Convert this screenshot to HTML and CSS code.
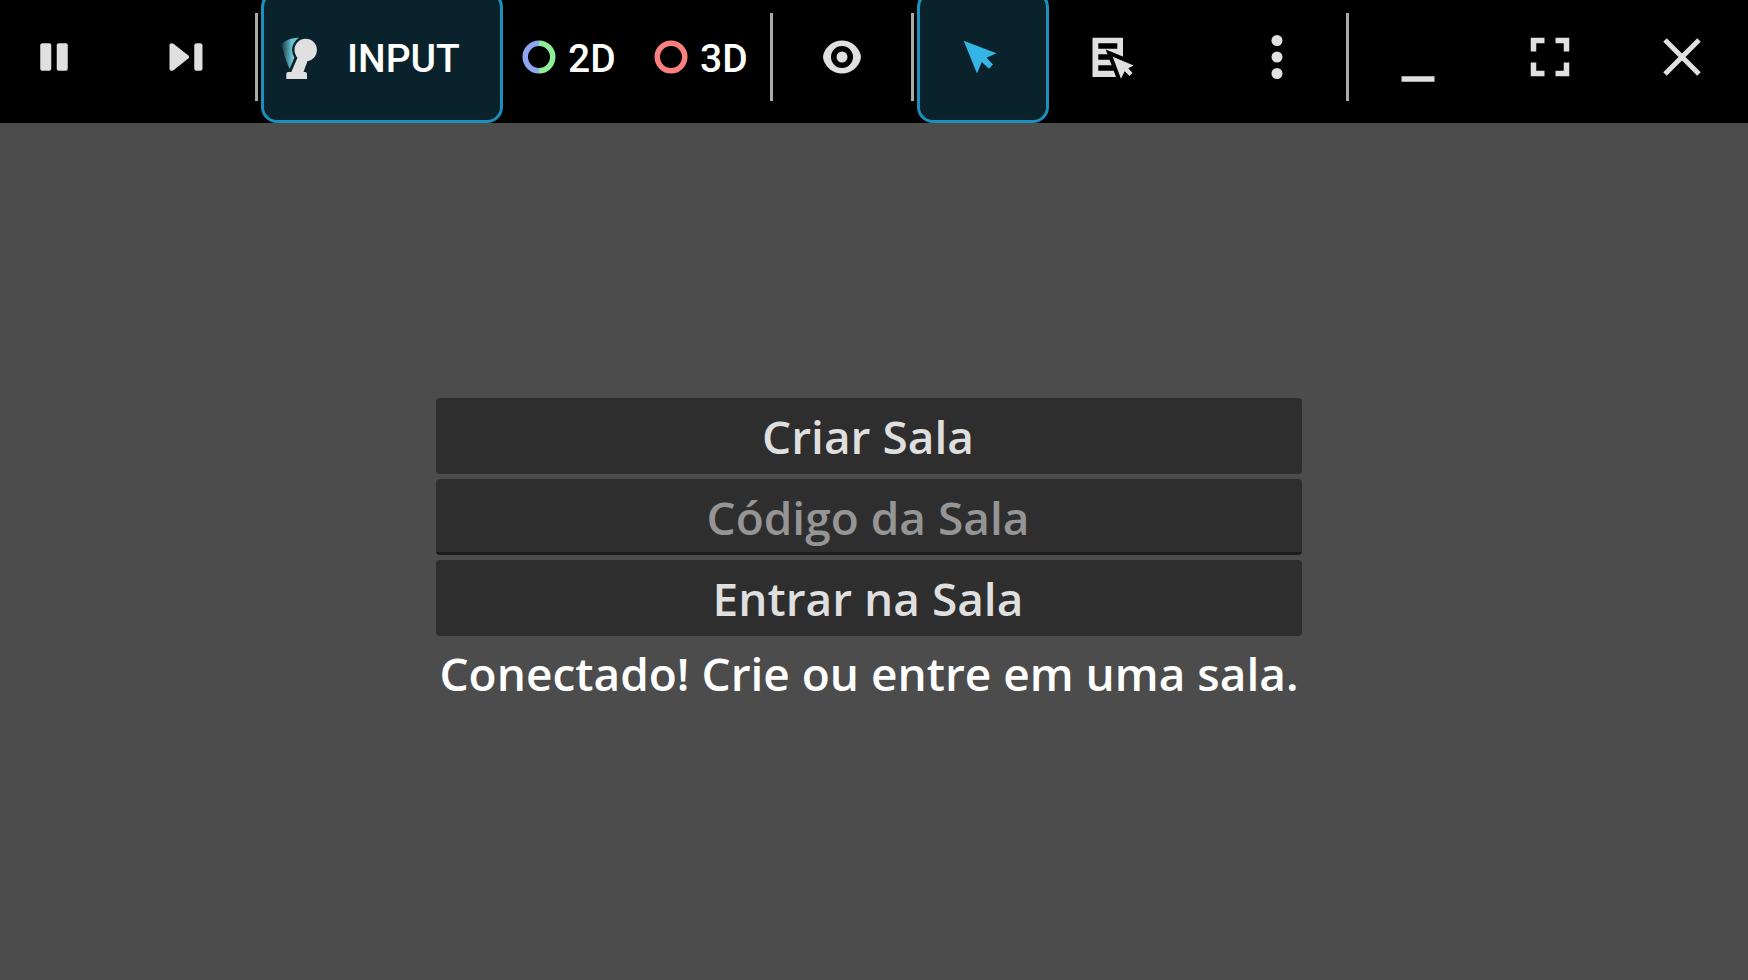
FILE: index.html
```html
<!DOCTYPE html>
<html lang="pt-BR">
<head>
<meta charset="utf-8">
<title>Sala</title>
<link rel="stylesheet" href="styles.css">
</head>
<body>
<header class="toolbar">
  <button class="tool tool-first" type="button" aria-label="Pausar">
    <svg class="icon" viewBox="0 0 44 44"><rect x="8.25" y="8.25" width="11" height="27.5" rx="2"/><rect x="24.75" y="8.25" width="11" height="27.5" rx="2"/></svg>
  </button>
  <button class="tool" type="button" aria-label="Próximo quadro">
    <svg class="icon" viewBox="0 0 44 44"><path d="M5.5 10.5v23c0 2.200 2.200 3 4 1.700L24.300 23.600c1-.9 1-2.300 0-3.200L9.500 8.800C7.700 7.500 5.500 8.300 5.500 10.500z"/><rect x="30.250" y="8.250" width="8.250" height="27.500" rx="2.500"/></svg>
  </button>
  <span class="divider"></span>
  <button class="tool tool-input active" type="button">
    <svg class="icon" viewBox="0 0 44 44">
      <defs><linearGradient id="fan" x1="0" x2="1"><stop offset="0" stop-color="#69c4d4" stop-opacity=".15"/><stop offset=".6" stop-color="#69c4d4"/><stop offset="1" stop-color="#69c4d4"/></linearGradient></defs>
      <path fill="url(#fan)" d="M2.500 8.700Q10 2.300 20 2.700Q13.500 7 13 14.500Q13 19 15.500 22.500L10.500 34Q5 22 2.500 8.700z"/>
      <circle cx="26.700" cy="15" r="11.200"/>
      <path d="M18.700 22.300L12.300 37H9.300q-2 0-2 2v5H28v-5q0-2-2-2H24.500L28.900 25z"/>
    </svg>
    <span class="label">INPUT</span>
  </button>
  <button class="tool tool-mode" type="button">
    <svg class="icon ring" viewBox="0 0 44 44"><path stroke="#8da5f3" d="M22 8.250a13.750 13.750 0 0 0 0 27.500"/><path stroke="#8eef97" d="M22 8.250a13.750 13.750 0 0 1 0 27.500"/></svg>
    <span class="label">2D</span>
  </button>
  <button class="tool tool-mode" type="button">
    <svg class="icon ring" viewBox="0 0 44 44"><circle stroke="#fc7f7f" cx="22" cy="22" r="13.750"/></svg>
    <span class="label">3D</span>
  </button>
  <span class="divider"></span>
  <button class="tool" type="button" aria-label="Visibilidade">
    <svg class="icon" viewBox="0 0 44 44"><path fill-rule="evenodd" d="M22 5.500C31 5.500 37.500 11 40.500 19Q41.500 22 40.500 25C37.500 33 31 38.500 22 38.500S6.500 33 3.500 25Q2.500 22 3.500 19C6.500 11 13 5.500 22 5.500zM22 11a11 11 0 1 0 0 22a11 11 0 1 0 0-22z"/><circle cx="22" cy="22" r="5.500"/></svg>
  </button>
  <span class="divider"></span>
  <button class="tool active" type="button" aria-label="Selecionar">
    <svg class="icon" viewBox="0 0 44 44"><path fill="#35b4e6" d="M2.700 5.700L35.500 18.300L25.500 22.700L32 29.500L28 33.800L20.800 27L16 38.500z"/></svg>
  </button>
  <button class="tool" type="button" aria-label="Lista de seleção">
    <svg class="icon" viewBox="0 0 44 44"><path fill-rule="evenodd" d="M-.5 2.750H30V42H-.5zM5.300 8.200v5.500h19V8.200zM5.300 19.200v5.500H24.300v-5.500zM5.300 30.200v5.500H30v-5.500z"/><path class="knock" d="M19.700 21.700L40.700 30.500L35.300 33.300L39.500 38L36.500 41L31.700 36.300L28 43.700z"/><path d="M19.700 21.700L40.700 30.500L35.300 33.300L39.500 38L36.500 41L31.700 36.300L28 43.700z"/></svg>
  </button>
  <span class="spacer"></span>
  <button class="tool" type="button" aria-label="Mais opções">
    <svg class="icon" viewBox="0 0 44 44"><circle cx="22" cy="5.500" r="5.500"/><circle cx="22" cy="22" r="5.500"/><circle cx="22" cy="38.500" r="5.500"/></svg>
  </button>
  <span class="divider"></span>
  <button class="tool" type="button" aria-label="Minimizar">
    <svg class="icon" viewBox="0 0 44 44"><path d="M5.500 41.250h33v5.500h-33z"/></svg>
  </button>
  <button class="tool" type="button" aria-label="Tela cheia">
    <svg class="icon" viewBox="0 0 44 44"><path d="M2.750 2.750H16.500v5.500H8.250v8.250h-5.500zM27.500 2.750h13.750V16.500h-5.500V8.250H27.500zM2.750 27.500h5.500v8.250h8.250v5.500H2.750zM35.750 27.500h5.500v13.750H27.500v-5.500h8.250z"/></svg>
  </button>
  <button class="tool" type="button" aria-label="Fechar">
    <svg class="icon" viewBox="0 0 44 44"><path stroke="#e0e0e0" stroke-width="5" d="M5 5L39 39M39 5L5 39"/></svg>
  </button>
</header>
<main class="stage">
  <form class="lobby">
    <button class="field" type="button">Criar Sala</button>
    <input class="field code" type="text" placeholder="Código da Sala" aria-label="Código da Sala">
    <button class="field" type="button">Entrar na Sala</button>
    <p class="status">Conectado! Crie ou entre em uma sala.</p>
  </form>
</main>
</body>
</html>
```
FILE: styles.css
```css
* { box-sizing: border-box; }

body {
  margin: 0;
  min-height: 100vh;
  display: flex;
  flex-direction: column;
  background: #4c4c4c;
  color: #fff;
  font-family: "Open Sans", sans-serif;
}

.toolbar {
  display: flex;
  align-items: flex-end;
  height: 123px;
  flex: none;
  overflow: hidden;
  background: #000;
}

.tool {
  display: flex;
  align-items: center;
  justify-content: center;
  flex: none;
  width: 132px;
  height: 132px;
  padding: 0;
  border: 3px solid transparent;
  border-radius: 16px;
  background: none;
  color: #fff;
  font: 500 39px Roboto, sans-serif;
}

.tool-first {
  width: 120px;
  padding-right: 12px;
}

.tool-input {
  width: 242px;
  justify-content: flex-start;
  gap: 24px;
  padding-left: 15px;
}

.tool-mode {
  justify-content: flex-start;
  gap: 7px;
  padding-left: 11px;
}

.label { padding-top: 3px; }

.active {
  border-color: #1c8fbd;
  background: #0a222b;
}

.icon {
  flex: none;
  width: 44px;
  height: 44px;
  overflow: visible;
  fill: #e0e0e0;
}

.ring {
  fill: none;
  stroke-width: 5.5;
}

.knock {
  fill: #000;
  stroke: #000;
  stroke-width: 8;
}

.divider {
  flex: none;
  width: 3px;
  height: 88px;
  margin: 0 3px 22px;
  background: #aaa;
}

.spacer { flex: 1; }

.stage {
  flex: 1;
  display: flex;
  align-items: center;
  justify-content: center;
  padding-right: 10px;
}

.lobby {
  display: flex;
  flex-direction: column;
  gap: 5px;
}

.field {
  width: 100%;
  height: 76px;
  padding: 0 14px 0 12px;
  border: 0;
  border-radius: 4px;
  background: #2e2e2e;
  color: #dfdfdf;
  font: 600 46px "Open Sans", sans-serif;
  text-align: center;
}

.code {
  padding-top: 2px;
  border-bottom: 3px solid #1b1b1b;
}

.code::placeholder {
  color: #959595;
  opacity: 1;
}

.status {
  margin: 0;
  padding: 0 3px;
  font-size: 46px;
  font-weight: 600;
  line-height: 64px;
  text-align: center;
}
```
